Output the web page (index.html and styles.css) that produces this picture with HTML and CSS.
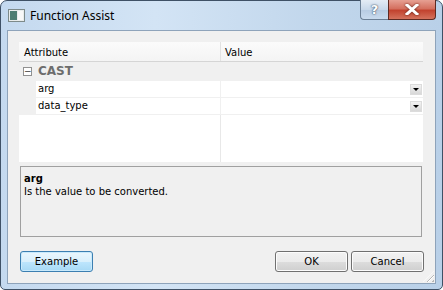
FILE: index.html
```html
<!DOCTYPE html>
<html lang="en">
<head>
    <meta charset="UTF-8">
    <title>Function Assist</title>
    <link rel="stylesheet" href="styles.css">
</head>
<body>
    <div class="window">
        <div class="titlebar">
            <svg class="app-icon" width="17" height="13" viewBox="0 0 17 13">
                <rect x="0.5" y="0.5" width="16" height="12" fill="#e8ecec" stroke="#7d8a8a"/>
                <rect x="2" y="2" width="7" height="9" fill="#4d7d72"/>
                <rect x="10" y="2" width="5" height="9" fill="#f8f8f8"/>
            </svg>
            <span class="title">Function Assist</span>
            <div class="caption-buttons">
                <div class="help-btn">?</div>
                <div class="close-btn">
                    <svg width="14" height="11" viewBox="0 0 14 11">
                        <path d="M2 1 L12 10 M12 1 L2 10" stroke="#fff" stroke-width="3" stroke-linecap="square"/>
                    </svg>
                </div>
            </div>
        </div>
        <div class="client">
            <div class="grid">
                <div class="grid-header">
                    <div class="col-attr">Attribute</div>
                    <div class="col-value">Value</div>
                </div>
                <div class="category">
                    <span class="toggle">&minus;</span>
                    <span class="category-name">CAST</span>
                </div>
                <div class="prop-row">
                    <div class="prop-name">arg</div>
                    <div class="prop-value"><span class="combo-btn"></span></div>
                </div>
                <div class="prop-row">
                    <div class="prop-name">data_type</div>
                    <div class="prop-value"><span class="combo-btn"></span></div>
                </div>
                <div class="grid-empty">
                    <div class="empty-left"></div>
                    <div class="empty-right"></div>
                </div>
            </div>
            <div class="description">
                <div class="desc-title">arg</div>
                <div class="desc-text">Is the value to be converted.</div>
            </div>
            <div class="buttons">
                <button class="btn default">Example</button>
                <div class="spacer"></div>
                <button class="btn">OK</button>
                <button class="btn">Cancel</button>
            </div>
            <div class="grip"></div>
        </div>
    </div>
</body>
</html>
```

FILE: styles.css
```css
html, body {
    margin: 0;
    padding: 0;
}
body {
    width: 443px;
    height: 290px;
    overflow: hidden;
    background: #fff;
}
.window {
    box-sizing: border-box;
    width: 443px;
    height: 290px;
    border: 1px solid #3f5166;
    border-radius: 7px 7px 5px 5px;
    background: linear-gradient(to right, #c4d9ef 0%, #d3e4f5 35%, #c2d7ec 70%, #b9d0e8 100%);
    display: flex;
    flex-direction: column;
    padding: 0 6px 5px 6px;
}
.titlebar {
    height: 29px;
    display: flex;
    align-items: flex-start;
    position: relative;
}
.app-icon {
    margin-top: 8px;
    margin-left: 1px;
}
.title {
    margin-top: 6px;
    margin-left: 5px;
    font-family: "Noto Sans", sans-serif;
    font-size: 12px;
    color: #000;
}
.caption-buttons {
    position: absolute;
    top: -1px;
    right: 0;
    display: flex;
    height: 20px;
}
.help-btn {
    width: 27px;
    height: 19px;
    border: 1px solid #6b7f95;
    border-top: none;
    border-right: none;
    border-radius: 0 0 0 4px;
    background: linear-gradient(#e4ecf5, #c8d8ea 50%, #b7cbe2 51%, #c9dbee);
    color: #fff;
    font-family: "DejaVu Sans", sans-serif;
    font-weight: bold;
    font-size: 13px;
    text-align: center;
    line-height: 19px;
    text-shadow: 0 0 2px #3d4f66, 0 0 1px #3d4f66;
}
.close-btn {
    width: 46px;
    height: 19px;
    border: 1px solid #5d2a22;
    border-top: none;
    border-radius: 0 0 4px 0;
    background: linear-gradient(#e6a093, #d4705f 45%, #c2432f 55%, #d4725d);
    display: flex;
    align-items: center;
    justify-content: center;
}
.close-btn svg {
    filter: drop-shadow(0 0 1px #5a1a10);
}
.client {
    flex: 1;
    border: 1px solid #8ea3ba;
    background: #f0f0f0;
    padding: 11px 12px 0 11px;
    display: flex;
    flex-direction: column;
    position: relative;
    font-family: "DejaVu Sans", sans-serif;
    font-size: 10px;
    color: #000;
}
.grid {
    height: 120px;
    background: #fff;
    display: flex;
    flex-direction: column;
}
.grid-header {
    display: flex;
    height: 19px;
    border-bottom: 1px solid #d5d5d5;
    background: linear-gradient(#fbfbfb, #f4f4f4);
    line-height: 21px;
}
.col-attr {
    width: 196px;
    padding-left: 5px;
    border-right: 1px solid #e2e2e2;
}
.col-value {
    padding-left: 4px;
}
.category {
    height: 18px;
    background: #f0f0f0;
    display: flex;
    align-items: center;
}
.toggle {
    box-sizing: border-box;
    width: 9px;
    height: 9px;
    border: 1px solid #919191;
    background: #fff;
    margin-left: 4px;
    font-size: 9px;
    line-height: 6px;
    text-align: center;
    color: #333;
}
.category-name {
    margin-left: 6px;
    font-weight: bold;
    font-size: 12px;
    color: #6d6d6d;
}
.prop-row {
    display: flex;
    height: 16px;
    border-top: 1px solid #f0f0f0;
    background: #f0f0f0;
    line-height: 16px;
}
.prop-name {
    width: 182px;
    margin-left: 17px;
    padding-left: 2px;
    background: #fff;
    border-right: 1px solid #f0f0f0;
}
.prop-value {
    flex: 1;
    background: #fff;
    display: flex;
    justify-content: flex-end;
    align-items: center;
}
.combo-btn {
    width: 12px;
    height: 11px;
    margin-right: 1px;
    background: linear-gradient(#f2f2f2, #d8d8d8);
    border: 1px solid #dcdcdc;
    box-sizing: border-box;
    display: flex;
    align-items: center;
    justify-content: center;
}
.combo-btn::after {
    content: "";
    border-left: 3px solid transparent;
    border-right: 3px solid transparent;
    border-top: 3px solid #000;
}
.grid-empty {
    flex: 1;
    display: flex;
    border-top: 1px solid #f0f0f0;
}
.empty-left {
    width: 201px;
    border-right: 1px solid #e8e8e8;
}
.description {
    box-sizing: border-box;
    height: 71px;
    margin: 4px 1px 0 1px;
    border: 1px solid #a0a0a0;
    background: #f0f0f0;
    padding: 5px 3px;
}
.desc-title {
    font-weight: bold;
    line-height: 13px;
}
.desc-text {
    line-height: 14px;
}
.buttons {
    display: flex;
    margin-top: 14px;
    margin-left: 1px;
    margin-right: -1px;
    gap: 3px;
}
.spacer {
    flex: 1;
}
.btn {
    box-sizing: border-box;
    width: 73px;
    height: 21px;
    border: 1px solid #707070;
    border-radius: 3px;
    background: linear-gradient(#f2f2f2, #ebebeb 50%, #dddddd 51%, #cfcfcf);
    box-shadow: inset 0 0 0 1px #fcfcfc;
    font-family: "DejaVu Sans", sans-serif;
    font-size: 10px;
    color: #000;
    padding: 0;
}
.btn.default {
    border-color: #3c7fb1;
    background: linear-gradient(#eaf6fd, #d9f0fc 50%, #bee6fd 51%, #a7d9f5);
    box-shadow: inset 0 0 0 1px #c9eafc;
}
.grip {
    position: absolute;
    right: 1px;
    bottom: 1px;
    width: 11px;
    height: 11px;
    background: repeating-linear-gradient(135deg, transparent 0 2px, #b7b7b7 2px 3px, #fff 3px 4px);
    clip-path: polygon(100% 0, 100% 100%, 0 100%);
}
```
